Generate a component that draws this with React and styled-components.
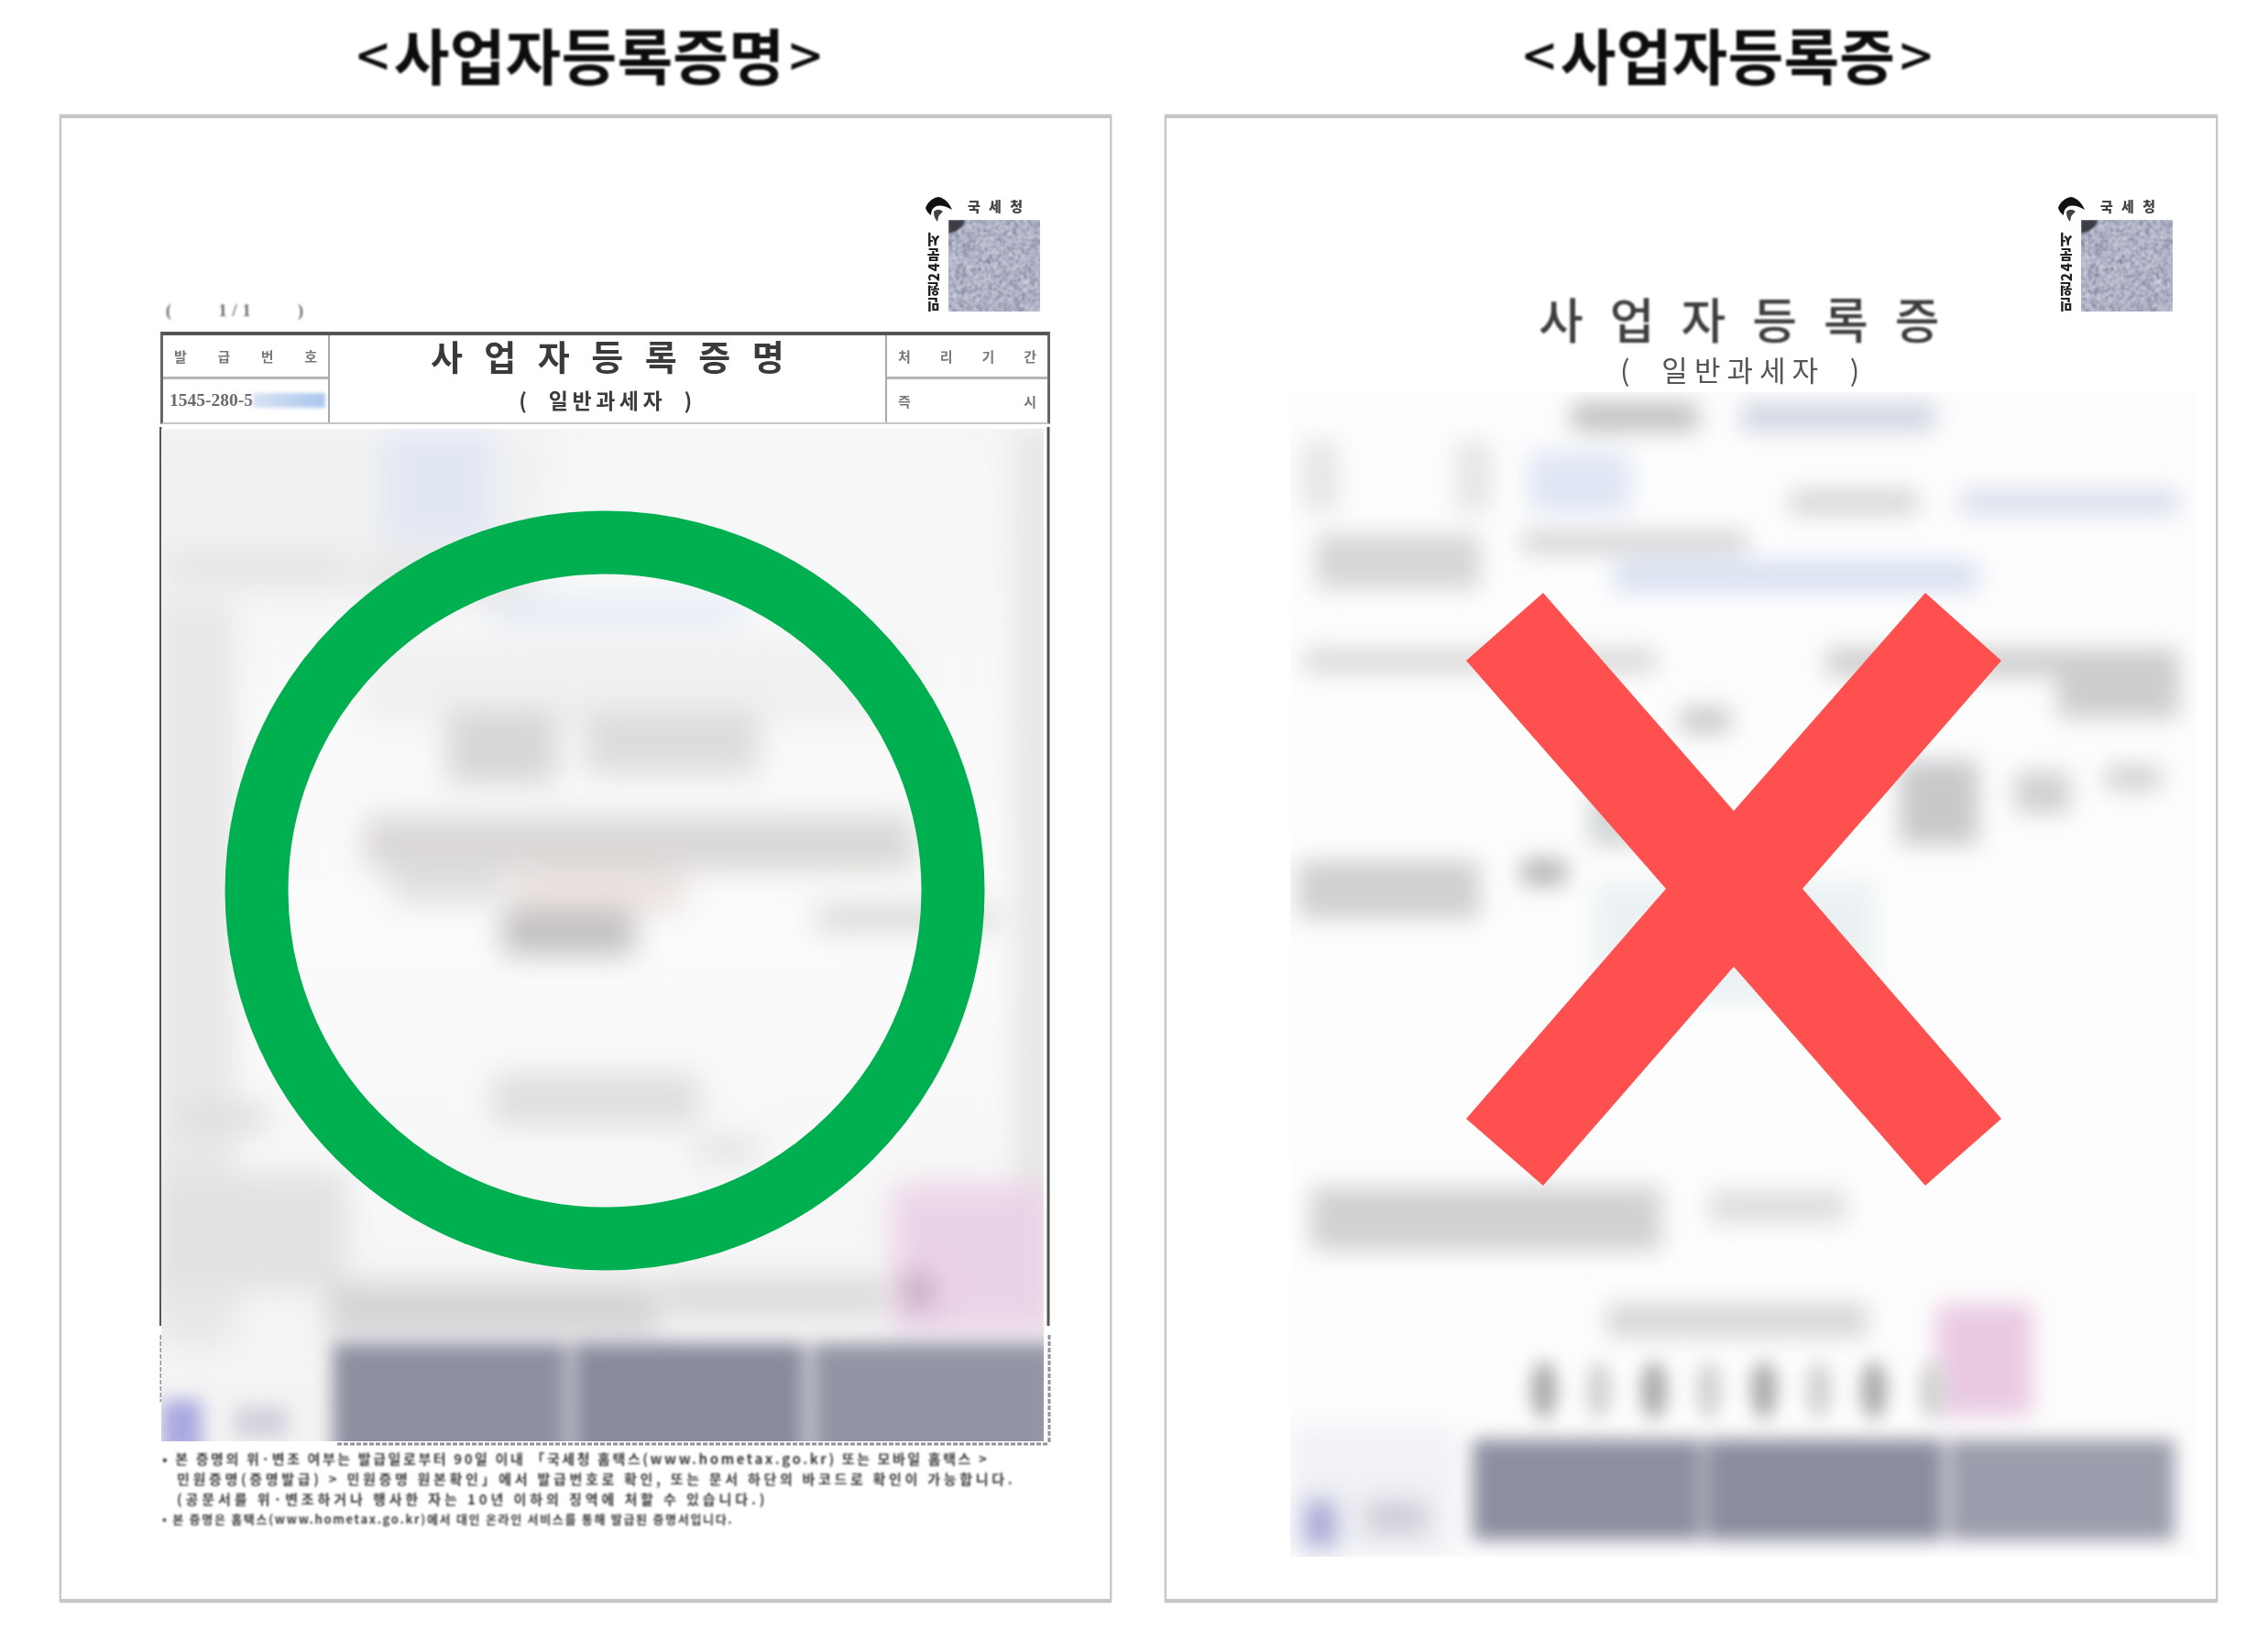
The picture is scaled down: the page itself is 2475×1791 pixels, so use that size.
import React from 'react'
import styled, { createGlobalStyle } from 'styled-components'

const KR = `"Noto Sans CJK KR", "Noto Sans", sans-serif`

const GlobalStyle = createGlobalStyle`
  html, body {
    margin: 0;
    padding: 0;
    background: #fff;
    font-family: ${KR};
  }
`

const Page = styled.div`
  display: grid;
  grid-template-columns: 1148px 1149px;
  grid-template-rows: 125px 1624px;
  column-gap: 58px;
  width: 2475px;
  height: 1791px;
  padding-left: 65px;
  box-sizing: border-box;
  overflow: hidden;
`

const Heading = styled.h2`
  margin: 0;
  padding: 0 0 9px ${({ $shift }) => $shift}px;
  display: flex;
  align-items: center;
  justify-content: center;
  font-size: 66px;
  font-weight: 700;
  letter-spacing: 0.2px;
  color: #0d0d0d;
  white-space: nowrap;
  filter: blur(0.8px);
`

const Angle = styled.span`
  font-weight: 500;
  font-size: 62px;
  margin: 0 5px;
`

const Card = styled.section`
  position: relative;
  box-sizing: border-box;
  background: #fff;
  border-style: solid;
  border-color: #c6c6c6;
  border-width: 4px 2px 4px 2px;
  padding: 86px 64px 0 ${({ $left }) => $left}px;
  box-shadow: 0 0 1.5px rgba(120, 120, 120, 0.5);
`

const DocHead = styled.div`
  display: flex;
  justify-content: space-between;
  align-items: flex-end;
  height: 135px;
`

const Pager = styled.div`
  display: flex;
  justify-content: space-between;
  width: 150px;
  margin-left: 6px;
  font-family: "Liberation Serif", serif;
  font-size: 18px;
  font-weight: 700;
  color: #666;
  filter: blur(0.8px);
`

const PageCount = styled.span`
  letter-spacing: 6px;
  margin-right: -6px;
`

const Stamp = styled.div`
  display: grid;
  grid-template-columns: 25px 100px;
  grid-template-rows: 25px 100px;
  align-self: flex-start;
  margin-right: ${({ $right }) => $right}px;
  filter: blur(0.7px);
`

const AgencyName = styled.div`
  display: flex;
  justify-content: space-between;
  padding: 0 19px 0 21px;
  font-size: 15px;
  font-weight: 900;
  line-height: 20px;
  color: #444;
`

const SideText = styled.div`
  writing-mode: vertical-rl;
  transform: rotate(180deg);
  font-size: 15px;
  font-weight: 900;
  line-height: 17px;
  letter-spacing: 1.5px;
  text-align: left;
  color: #222;
  white-space: nowrap;
`

const Table = styled.div`
  display: grid;
  grid-template-columns: 182px 1fr 177px;
  width: 971px;
  height: 101px;
  margin-top: 12px;
  box-sizing: border-box;
  border-top: 4px solid #555;
  border-left: 3px solid #666;
  border-right: 3px solid #666;
  border-bottom: 2px solid #c4c6ca;
  filter: blur(0.7px);
`

const MetaCell = styled.div`
  display: grid;
  grid-template-rows: 1fr 1fr;
  border-right: ${({ $divider }) => ($divider ? '2px solid #a8aab0' : 'none')};
  border-left: ${({ $lead }) => ($lead ? '2px solid #a8aab0' : 'none')};
`

const MetaRow = styled.div`
  display: flex;
  align-items: center;
  justify-content: space-between;
  padding: 0 12px;
  font-size: 15px;
  font-weight: 700;
  color: #777;
  &:first-child {
    border-bottom: 3px solid #b4b5b8;
  }
`

const IssueNo = styled.div`
  display: flex;
  align-items: center;
  padding: 0 3px 0 7px;
  font-family: "Liberation Serif", serif;
  font-size: 19.5px;
  font-weight: 700;
  color: #6a6a6a;
  white-space: nowrap;
`

const Redacted = styled.span`
  flex: 1;
  height: 16px;
  background: linear-gradient(90deg, #d9e2f2, #a9c6ee);
  filter: blur(2px);
`

const TitleCell = styled.div`
  display: flex;
  flex-direction: column;
  align-items: center;
`

const FormTitle = styled.div`
  font-size: 38px;
  font-weight: 700;
  line-height: 44px;
  letter-spacing: 23.5px;
  margin-right: -23px;
  color: #3a3a3a;
`

const FormSub = styled.div`
  margin-top: 11px;
  font-size: 23px;
  font-weight: 700;
  line-height: 30px;
  letter-spacing: 4.5px;
  color: #3c3c3c;
  white-space: pre;
`

const Notes = styled.div`
  margin: 1px 0 0 2px;
  font-weight: 700;
  line-height: 22px;
  color: #3a3a3a;
  filter: blur(0.8px);
`

const NoteLine = styled.div`
  white-space: nowrap;
  font-size: ${({ $size }) => $size}px;
  letter-spacing: ${({ $track }) => $track}px;
  padding-left: ${({ $indent }) => ($indent ? 16 : 0)}px;
`

const CertHead = styled.div`
  display: flex;
  justify-content: flex-end;
`

const CertTitle = styled.div`
  margin: -24px 0 0 ${({ $left }) => $left}px;
  font-size: 53px;
  font-weight: 500;
  line-height: 62px;
  letter-spacing: 29px;
  color: #3d3d3d;
  white-space: nowrap;
  filter: blur(0.8px);
`

const CertSub = styled.div`
  margin: 7px 0 0 ${({ $left }) => $left}px;
  font-size: 31px;
  font-weight: 400;
  line-height: 36px;
  letter-spacing: 7px;
  color: #555;
  white-space: pre;
  filter: blur(0.7px);
`

const Scan = styled.svg`
  display: block;
  margin-top: ${({ $top }) => $top}px;
  margin-left: ${({ $shift }) => $shift}px;
`

const Mark = styled.svg`
  position: absolute;
  left: ${({ $x }) => $x}px;
  top: ${({ $y }) => $y}px;
`

// rect = [x, y, w, h, colour], in full page coordinates
const LEFT_PATCHES = [
  [170, 468, 90, 1000, '#e8e8e8'],
  [1110, 468, 50, 980, '#e6e6e6'],
  [178, 468, 420, 190, '#f0f1f2'],
  [420, 470, 120, 120, '#e2e7f4'],
  [540, 655, 270, 26, '#e2eaf6'],
  [190, 606, 190, 26, '#e2e2e2'],
  [400, 600, 170, 60, '#e8e8e8'],
  [400, 700, 600, 90, '#f0f0f0'],
  [490, 775, 120, 80, '#d8d6d5'],
  [640, 775, 190, 70, '#dcdcdc'],
  [400, 890, 600, 60, '#dad8d7'],
  [430, 950, 120, 36, '#e0e0e0'],
  [560, 950, 190, 46, '#ece4e2'],
  [550, 992, 145, 50, '#c2c0c0'],
  [893, 990, 195, 24, '#d2d2d2'],
  [540, 1172, 225, 56, '#dedede'],
  [760, 1240, 70, 30, '#e4e4e4'],
  [200, 1205, 95, 30, '#dedede'],
  [170, 1280, 210, 130, '#e2e2e2'],
  [727, 1396, 240, 38, '#d8d8d8'],
  [360, 1400, 360, 60, '#d4d4d6'],
  [976, 1292, 175, 165, '#ebd3e7'],
  [988, 1390, 30, 38, '#b89ab8'],
]

const LEFT_BAND = [
  [365, 1466, 256, 140, '#8e90a2'],
  [628, 1466, 252, 140, '#898b9d'],
  [888, 1466, 270, 140, '#9395a5'],
  [178, 1528, 44, 60, '#a8a8e0'],
  [258, 1535, 58, 34, '#d4d0dc'],
]

const RIGHT_PATCHES = [
  [1712, 443, 138, 30, '#bebebe'],
  [1897, 443, 212, 30, '#cdd3e0'],
  [1418, 484, 40, 78, '#e6e6e6'],
  [1585, 484, 40, 78, '#e6e6e6'],
  [1665, 495, 112, 68, '#e0e6f4'],
  [1950, 538, 140, 26, '#d4d4d4'],
  [2136, 538, 239, 26, '#d8dcec'],
  [1433, 586, 179, 60, '#d6d6d6'],
  [1658, 584, 246, 22, '#d0d0d0'],
  [1758, 616, 398, 32, '#d6dff0'],
  [1420, 711, 384, 26, '#d8d8d8'],
  [1990, 711, 385, 30, '#cccccc'],
  [2242, 741, 133, 46, '#cccdce'],
  [1831, 776, 54, 26, '#c4c4c4'],
  [2070, 833, 86, 92, '#c8c9cb'],
  [2196, 845, 60, 46, '#d0d0d0'],
  [2295, 839, 60, 26, '#cecece'],
  [1731, 868, 74, 58, '#d2d6d6'],
  [1413, 942, 199, 64, '#d0d0d0'],
  [1658, 942, 48, 26, '#aaaaaa'],
  [1738, 965, 305, 132, '#ebf1f3'],
  [1427, 1298, 383, 70, '#d0d1d1'],
  [1862, 1302, 150, 36, '#dedede'],
  [1750, 1426, 285, 36, '#d6d6d6'],
  [2110, 1426, 105, 122, '#e9c9e2'],
  [1405, 1560, 180, 142, '#f0f2f5'],
  [1420, 1640, 36, 52, '#a4a4d6'],
  [1487, 1640, 68, 38, '#d0ccd8'],
]

const RIGHT_BAND = [
  [1604, 1574, 250, 110, '#8d8fa1'],
  [1858, 1574, 260, 110, '#8b8d9f'],
  [2124, 1574, 246, 110, '#9b9dac'],
]

const SEAL_DOTS = [1682, 1742, 1802, 1862, 1922, 1982, 2042, 2106]

const Patches = ({ items }) => items.map(([x, y, w, h, fill], i) => (
  <rect key={i} x={x} y={y} width={w} height={h} fill={fill} />
))

const LeftScan = () => (
  <Scan $top={3} $shift={-1} width="974" height="1114" viewBox="176 466 974 1114">
    <defs>
      <filter id="soft-left" x="-20%" y="-20%" width="140%" height="140%"><feGaussianBlur stdDeviation="16" /></filter>
      <filter id="band-left" x="-20%" y="-20%" width="140%" height="140%"><feGaussianBlur stdDeviation="10" /></filter>
      <clipPath id="clip-left"><rect x="178" y="468" width="963" height="1105" /></clipPath>
      <linearGradient id="wash-left" x1="0" y1="0" x2="0" y2="1">
        <stop offset="0" stopColor="#f5f6f6" />
        <stop offset="0.5" stopColor="#fbfbfb" />
        <stop offset="1" stopColor="#f3f3f3" />
      </linearGradient>
    </defs>
    <path d="M177 466V1447M1146 466V1447" stroke="#555" strokeWidth="3" fill="none" />
    <path d="M1147 1457V1576M178 1457V1530M370 1576H1147" stroke="#8f90a0" strokeWidth="3" strokeDasharray="5 2" fill="none" />
    <rect x="178" y="468" width="963" height="1105" fill="url(#wash-left)" />
    <g clipPath="url(#clip-left)">
      <g filter="url(#soft-left)"><Patches items={LEFT_PATCHES} /></g>
      <g filter="url(#band-left)"><Patches items={LEFT_BAND} /></g>
    </g>
  </Scan>
)

const RightScan = () => (
  <Scan $top={7} $shift={-2} width="989" height="1271" viewBox="1405 431 989 1271">
    <defs>
      <filter id="soft-right" x="-20%" y="-20%" width="140%" height="140%"><feGaussianBlur stdDeviation="13" /></filter>
      <filter id="band-right" x="-20%" y="-20%" width="140%" height="140%"><feGaussianBlur stdDeviation="10" /></filter>
      <clipPath id="clip-right"><rect x="1405" y="431" width="989" height="1271" /></clipPath>
    </defs>
    <rect x="1405" y="431" width="989" height="1271" fill="#fdfdfd" />
    <g clipPath="url(#clip-right)">
      <g filter="url(#soft-right)"><Patches items={RIGHT_PATCHES} /></g>
      <g filter="url(#band-right)">
        <Patches items={RIGHT_BAND} />
        {SEAL_DOTS.map((x, i) => (
          <ellipse key={x} cx={x} cy="1520" rx="14" ry="32" fill={i % 2 ? '#d2d2d2' : '#a8a8a8'} />
        ))}
      </g>
    </g>
  </Scan>
)

// small deterministic noise so the code square looks the same on each run
const noiseCells = () => {
  const cells = []
  let seed = 7
  for (let y = 0; y < 50; y++) {
    for (let x = 0; x < 50; x++) {
      seed = (seed * 16807) % 2147483647
      if (seed % 100 < 40) cells.push([x * 2, y * 2, seed % 3])
    }
  }
  return cells
}

const NOISE = noiseCells()
const NOISE_FILL = ['#84889f', '#9497b2', '#d0d2de']

const CodeSquare = ({ id }) => (
  <svg width="100" height="100" viewBox="0 0 100 100">
    <defs>
      <filter id={id}><feGaussianBlur stdDeviation="0.8" /></filter>
    </defs>
    <rect width="100" height="100" fill="#b4b6ca" />
    <g filter={`url(#${id})`}>
      {NOISE.map(([x, y, c], i) => <rect key={i} x={x} y={y} width="2" height="2" fill={NOISE_FILL[c]} />)}
      <path d="M0 0H18C17 8 10 13 0 15Z" fill="#3c3c44" />
    </g>
  </svg>
)

const AgencyLogo = () => (
  <svg width="32" height="30" viewBox="0 0 32 30" style={{ overflow: 'visible' }}>
    <path d="M14 0C7 1 2 6 0 12c1 3 3 6 6 8 0-4 1-7 4-9 5-3 13-1 19 3C26 7 21 1 14 0Z" fill="#111" />
    <path d="M9 16c3-3 7-3 10 0-2 2-4 3-5 6l-1 5c-3-3-4-7-4-11Z" fill="#444" />
  </svg>
)

const DocStamp = ({ id, right }) => (
  <Stamp $right={right}>
    <AgencyLogo />
    <AgencyName><span>국</span><span>세</span><span>청</span></AgencyName>
    <SideText>민원24문서</SideText>
    <CodeSquare id={id} />
  </Stamp>
)

const MetaLabel = ({ text }) => (
  <MetaRow>{text.split('').map((c, i) => <span key={i}>{c}</span>)}</MetaRow>
)

const App = () => (
  <Page>
    <GlobalStyle />
    <Heading $shift={8}><Angle>&lt;</Angle>사업자등록증명<Angle>&gt;</Angle></Heading>
    <Heading $shift={80}><Angle>&lt;</Angle>사업자등록증<Angle>&gt;</Angle></Heading>

    <Card $left={108}>
      <DocHead>
        <Pager><span>(</span><PageCount>1/1</PageCount><span>)</span></Pager>
        <DocStamp id="code-left" right={12} />
      </DocHead>
      <Table>
        <MetaCell $divider>
          <MetaLabel text="발급번호" />
          <IssueNo>1545-280-5<Redacted /></IssueNo>
        </MetaCell>
        <TitleCell>
          <FormTitle>사업자등록증명</FormTitle>
          <FormSub>(  일반과세자  )</FormSub>
        </TitleCell>
        <MetaCell $lead>
          <MetaLabel text="처리기간" />
          <MetaLabel text="즉시" />
        </MetaCell>
      </Table>
      <LeftScan />
      <Notes>
        <NoteLine $size={15} $track={2.6}>• 본 증명의 위·변조 여부는 발급일로부터 90일 이내 「국세청 홈택스(www.hometax.go.kr) 또는 모바일 홈택스 &gt;</NoteLine>
        <NoteLine $size={15} $indent $track={3.7}>민원증명(증명발급) &gt; 민원증명 원본확인」에서 발급번호로 확인, 또는 문서 하단의 바코드로 확인이 가능합니다.</NoteLine>
        <NoteLine $size={15} $indent $track={3.9}>(공문서를 위·변조하거나 행사한 자는 10년 이하의 징역에 처할 수 있습니다.)</NoteLine>
        <NoteLine $size={13} $track={1.7}>• 본 증명은 홈택스(www.hometax.go.kr)에서 대인 온라인 서비스를 통해 발급된 증명서입니다.</NoteLine>
      </Notes>
      <Mark $x={178} $y={428} width="830" height="830" viewBox="0 0 830 830">
        <circle cx="415" cy="415" r="380" fill="none" stroke="#00b050" strokeWidth="69" />
      </Mark>
    </Card>

    <Card $left={137}>
      <CertHead>
        <DocStamp id="code-right" right={-17} />
      </CertHead>
      <CertTitle $left={269}>사업자등록증</CertTitle>
      <CertSub $left={358}>(  일반과세자  )</CertSub>
      <RightScan />
      <Mark $x={327} $y={518} width="584" height="647" viewBox="0 0 584 647">
        <path d="M84 0L292 238L501 0L584 74L367 323L584 574L501 647L292 408L84 647L0 574L218 323L0 74Z" fill="#ff5050" />
      </Mark>
    </Card>
  </Page>
)

export default App
